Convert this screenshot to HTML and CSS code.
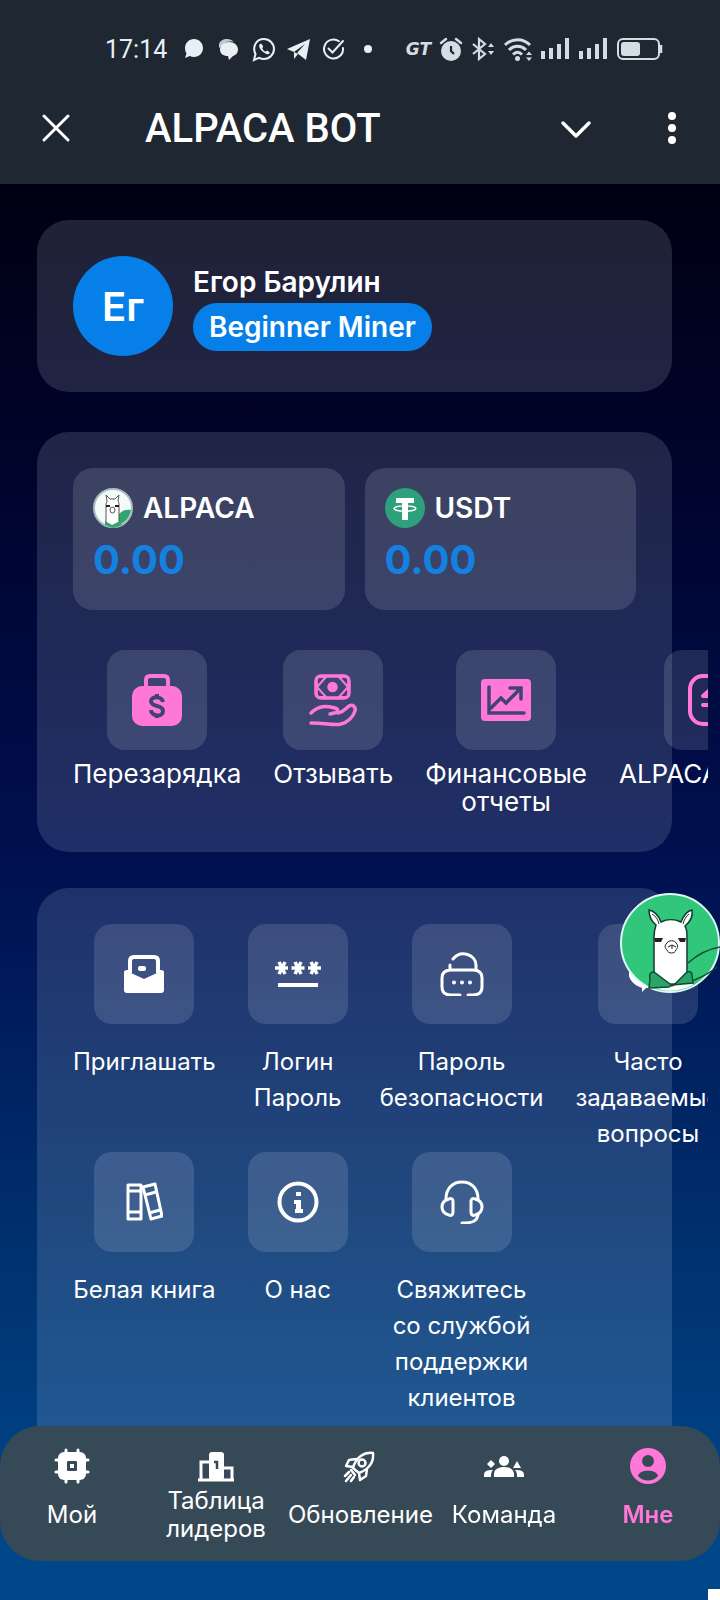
FILE: index.html
```
<!DOCTYPE html>
<html lang="ru">
<head>
  <meta charset="UTF-8">
  <title>ALPACA BOT</title>
  <meta name="viewport" content="width=device-width,initial-scale=1">
  <link rel="stylesheet" href="styles.css">
</head>
<body>
  <header class="top">
    <div class="status">
      <div class="status-left">
        <span class="time">17:14</span>
        <svg width="25" height="26" viewBox="0 0 25 26" fill="currentColor"><path d="M13 3c5 0 9 4 9 9s-4 9-9 9c-1.500 0-3-.3-4.200-1L4 22l1.500-4.500C4.500 16 4 14 4 12c0-5 4-9 9-9z"/></svg>
        <svg width="25" height="26" viewBox="0 0 25 26" fill="currentColor"><path d="M3 8c1-3 4-5 8-5 3 0 5 1 7 3-5-1-9-.5-12 4L3 12z" opacity=".8"/><path d="M13 6c5 0 9 3 9 7.500 0 3.500-2 5.500-5 6.500l-4 4-1-4c-5 0-8-2.500-8-6.500C4 9 8 6 13 6z"/></svg>
        <svg width="25" height="28" viewBox="0 0 25 28" fill="none" stroke="currentColor" stroke-width="2"><path d="M3 25l1.500-6C1 12 5 4 13 4c5.500 0 10 4.500 10 10s-4.500 10-10 10c-2 0-3.500-.5-5-1.200z"/><path d="M9 9c-1.500 1.500-1 4 2 7s6 4 7.500 2.500c.7-1-.5-2-2.500-3l-1.500 1.200c-1.500-.7-2.700-2-3.300-3.400l1-1.500C11.500 10 10.500 8 9 9z" fill="currentColor" stroke="none"/></svg>
        <svg width="25" height="26" viewBox="0 0 25 26" fill="currentColor"><path d="M24 3L1 13l7 3L19 8l-8 9 9 7z"/><path d="M8 16v7l4-5z"/></svg>
        <svg width="25" height="26" viewBox="0 0 25 26" fill="none" stroke="currentColor" stroke-width="2" stroke-linecap="round"><path d="M18 5.200A9.500 9.500 0 1 0 22 12"/><path d="M7.500 12.500l4 4L22 5"/></svg>
        <svg width="25" height="26" viewBox="0 0 25 26" fill="currentColor"><circle cx="12" cy="13" r="4"/></svg>
      </div>
      <div class="status-right">
        <span class="gt">GT</span>
        <svg width="24" height="26" viewBox="0 0 24 26"><circle cx="12" cy="15" r="10" fill="currentColor"/><path d="M2 7l5-4M22 7l-5-4" stroke="currentColor" stroke-width="2.500" stroke-linecap="round"/><path d="M12 10v5l3 3" stroke="#1f2832" stroke-width="2.200" fill="none"/></svg>
        <svg width="24" height="26" viewBox="0 0 24 26" fill="none" stroke="currentColor" stroke-width="2.200"><path d="M2 8l12 10-6 5V3l6 5L2 18"/><path d="M17 11l3-4 3 4zM17 15l3 4 3-4z" fill="currentColor" stroke="none"/></svg>
        <svg width="30" height="26" viewBox="0 0 30 26" fill="none" stroke="currentColor" stroke-width="3"><path d="M2 9c7-7 18-7 25 0M6 14c5-5 12-5 17 0M10 18.500c3-3 6-3 9 0"/><circle cx="14.500" cy="22.500" r="2.500" fill="currentColor" stroke="none"/><path d="M23 19l3-3.500 3 3.500zM23 21.500l3 3.500 3-3.500z" fill="currentColor" stroke="none"/></svg>
        <svg width="30" height="26" viewBox="0 0 30 26" fill="currentColor"><path d="M0 15h4v8H0zM8 12h4v11H8zM16 8h4v15h-4zM24 2h4v21h-4z"/></svg>
        <svg width="30" height="26" viewBox="0 0 30 26" fill="currentColor"><path d="M0 15h4v8H0zM8 12h4v11H8zM16 8h4v15h-4zM24 2h4v21h-4z"/></svg>
        <svg width="46" height="26" viewBox="0 0 46 26"><rect x="1" y="3" width="41" height="20" rx="5" fill="none" stroke="currentColor" stroke-width="2"/><rect x="4" y="6" width="19" height="14" rx="3" fill="currentColor"/><path d="M44 9v8" stroke="currentColor" stroke-width="2.500"/></svg>
      </div>
    </div>
    <div class="titlebar">
      <button class="icon-btn" aria-label="Закрыть"><svg width="32" height="32" viewBox="0 0 32 32" fill="none" stroke="currentColor" stroke-width="3" stroke-linecap="round"><path d="M4 4l24 24M28 4L4 28"/></svg></button>
      <h1>ALPACA BOT</h1>
      <button class="icon-btn" aria-label="Свернуть"><svg width="32" height="32" viewBox="0 0 32 32" fill="none" stroke="currentColor" stroke-width="3.500" stroke-linecap="round" stroke-linejoin="round"><path d="M3 11l13 13L29 11"/></svg></button>
      <button class="icon-btn" aria-label="Меню"><svg width="32" height="32" viewBox="0 0 32 32" fill="currentColor"><circle cx="16" cy="4" r="4"/><circle cx="16" cy="16" r="4"/><circle cx="16" cy="28" r="4"/></svg></button>
    </div>
  </header>

  <main>
    <section class="card profile">
      <div class="avatar">Ег</div>
      <div>
        <div class="name">Егор Барулин</div>
        <div class="badge">Beginner Miner</div>
      </div>
    </section>

    <section class="card wallet">
      <div class="balances">
        <div class="balance">
          <div class="coin">
            <svg width="40" height="40" viewBox="0 0 40 40"><circle cx="20" cy="20" r="19" fill="#f4fbf8" stroke="#a5bfc0" stroke-width="2"/><path d="M24 31c2-7 7-10 14-9-1 5-3 9-7 12l-5 3z" fill="#2ea66e"/><path d="M13 37V17c0-2 1-3 1-4l-1-6 4 4h5l4-4-1 6c1 2 1 3 1 5v19" fill="#fff" stroke="#555" stroke-width="1"/><path d="M12 33l7 4 8-4 2 4-9 3-8-3z" fill="#2ea66e"/><path d="M13 18h4M22 18h4" stroke="#222" stroke-width="2"/><ellipse cx="19.500" cy="22" rx="2.500" ry="3" fill="none" stroke="#555"/></svg>
            ALPACA
          </div>
          <div class="amount">0.00</div>
        </div>
        <div class="balance">
          <div class="coin">
            <svg width="40" height="40" viewBox="0 0 40 40"><circle cx="20" cy="20" r="20" fill="#2ea07b"/><path d="M11 10h18v5h-6v17h-6V15h-6z" fill="#fff"/><ellipse cx="20" cy="20.500" rx="11" ry="2.700" fill="none" stroke="#fff" stroke-width="1.300"/></svg>
            USDT
          </div>
          <div class="amount">0.00</div>
        </div>
      </div>
      <div class="scroller actions">
        <a class="item" href="#"><span class="tile pink">
          <svg width="52" height="54" viewBox="0 0 52 54"><path d="M15 14V7c0-3 2-4 4-4h14c2 0 4 1 4 4v7" fill="none" stroke="currentColor" stroke-width="4"/><rect x="1" y="13" width="50" height="40" rx="10" fill="currentColor"/><path d="M32 29c-1-6-12-6-12-1 0 7 12 3 12 10s-12 5-12-1M26 21v4M26 41v4" fill="none" stroke="#414473" stroke-width="4"/></svg>
        </span>Перезарядка</a>
        <a class="item" href="#"><span class="tile pink">
          <svg width="50" height="54" viewBox="0 0 50 54" fill="none" stroke="currentColor" stroke-width="3.500" stroke-linecap="round" stroke-linejoin="round"><rect x="8" y="3" width="33" height="22" rx="5"/><path d="M9 14l9-10H10c-1 0-2 1-2 3zM9 14l9 10h-8c-1 0-2-1-2-3zM40 14L31 4h8c1 0 2 1 2 3zM40 14l-9 10h8c1 0 2-1 2-3z" stroke-width="2"/><circle cx="24.500" cy="14" r="3.500" fill="currentColor"/><path d="M3 40c8-8 15-7 24-5 4 1 3 5-1 5l-4 1M30 40c6-1 8-5 11-7 4-2 7 1 6 5-2 6-7 11-14 13-7 2-14-1-30-1"/></svg>
        </span>Отзывать</a>
        <a class="item" href="#"><span class="tile pink">
          <svg width="50" height="42" viewBox="0 0 50 42"><rect width="50" height="42" rx="4" fill="currentColor"/><path d="M8 8v26h35M10 29l10-10 5 5 14-14M29 9h11v11" fill="none" stroke="#414473" stroke-width="3.500" stroke-linecap="round"/></svg>
        </span>Финансовые<br>отчеты</a>
        <a class="item" href="#"><span class="tile pink">
          <svg width="52" height="52" viewBox="0 0 52 52" fill="none" stroke="currentColor" stroke-width="4" stroke-linecap="round" stroke-linejoin="round"><rect x="2" y="2" width="48" height="48" rx="13"/><path d="M38 22H15l8-7M15 31h23l-8 7"/></svg>
        </span>ALPACA обмен</a>
      </div>
    </section>

    <section class="card menu">
      <div class="scroller links">
        <a class="item" href="#"><span class="tile">
          <svg width="42" height="38" viewBox="0 0 42 38"><path d="M7 18V6c0-2 1-4 4-4h20c3 0 4 2 4 4v12" fill="none" stroke="currentColor" stroke-width="4"/><path d="M1 17c0-1 1-2 3-2h4v3l13 6 13-6v-3h4c2 0 3 1 3 2v18c0 2-1 3-3 3H4c-2 0-3-1-3-3z" fill="currentColor"/><rect x="15" y="11" width="8" height="5" rx="2" fill="currentColor"/></svg>
        </span>Приглашать</a>
        <a class="item" href="#"><span class="tile">
          <svg width="46" height="26" viewBox="0 0 46 26" fill="none" stroke="currentColor" stroke-width="3.500"><path d="M4 1l6 12M10 1L4 13M0 7h13M20 1l6 12M26 1l-6 12M16.500 7h13M36 1l6 12M42 1l-6 12M33 7h13"/><path d="M3 24h40" stroke-width="4"/></svg>
        </span>Логин Пароль</a>
        <a class="item" href="#"><span class="tile">
          <svg width="44" height="44" viewBox="0 0 44 44" fill="none" stroke="currentColor" stroke-width="3" stroke-linecap="round"><path d="M10 18v-5M13 7c8-10 23-4 23 6v5M20 43h-9c-6 0-9-3-9-8v-9c0-5 3-8 9-8h22c6 0 9 3 9 8v9c0 5-3 8-9 8h-5"/><path d="M14 30.500h0M22 30.500h0M30 30.500h0" stroke-width="4"/></svg>
        </span>Пароль безопасности</a>
        <a class="item" href="#"><span class="tile">
          <svg width="44" height="44" viewBox="0 0 44 44" fill="currentColor"><path d="M12 4h25c3 0 5 2 5 5v22c0 3-2 5-5 5H20l-4 4v-4c-6-2-12-7-13-12V13c0-5 4-9 9-9z"/></svg>
        </span>Часто задаваемые вопросы</a>
        <a class="item" href="#"><span class="tile">
          <svg width="38" height="40" viewBox="0 0 38 40" fill="none" stroke="currentColor" stroke-width="3" stroke-linejoin="round"><path d="M3 3h13v34H3zM3 9h13M3 30h13"/><path d="M18 5l12-3 7 32-11 3zM20 13l11-3M24 31l11-3"/></svg>
        </span>Белая книга</a>
        <a class="item" href="#"><span class="tile">
          <svg width="42" height="42" viewBox="0 0 42 42"><circle cx="21" cy="21" r="18.500" fill="none" stroke="currentColor" stroke-width="4"/><path d="M19 11h5v4h-5zM17 19h7v9h2v4h-8v-4h1v-5h-2z" fill="currentColor"/></svg>
        </span>О нас</a>
        <a class="item" href="#"><span class="tile">
          <svg width="44" height="44" viewBox="0 0 44 44" fill="none" stroke="currentColor" stroke-width="3" stroke-linecap="round" stroke-linejoin="round"><path d="M6 19C6 9 12 2 22 2s16 7 16 17"/><path d="M9 19c2-1 4 0 4 2v11c0 3-2 4-4 3-4-1-7-4-7-8s3-7 7-8zM35 19c-2-1-4 0-4 2v11c0 3 2 4 4 3 4-1 7-4 7-8s-3-7-7-8z"/><path d="M38 35c-1 6-5 8-16 8"/></svg>
        </span>Свяжитесь со службой поддержки клиентов</a>
      </div>
    </section>
  </main>

  <button class="fab" aria-label="Alpaca">
    <svg viewBox="0 0 100 100">
      <circle cx="50" cy="50" r="49" fill="#31c77b" stroke="#dff8f4" stroke-width="2"/>
      <path d="M68 70c10-9 20-14 32-16M72 88c10-4 18-8 25-14" fill="none" stroke="#124b35" stroke-width="1.500"/>
      <path d="M31 93c12 7 28 6 42-1l-1-5H32z" fill="#fff"/>
      <path d="M34 84V44c0-6 1-9 2-12-5-4-7-10-7-15 6 1 10 7 12 12 6-3 14-3 20 0 2-5 6-11 11-12 1 6-2 12-7 16 2 3 2 6 2 11v40L52 93z" fill="#fff" stroke="#15392c" stroke-width="1.500"/>
      <path d="M32 21c4 2 6 6 7 10M69 21c-3 2-5 6-6 10" fill="none" stroke="#15392c"/>
      <path d="M34 45h9l-2 4h-6zM58 45h8l-1 4h-5z" fill="#222"/>
      <path d="M47 50c1-3 8-3 9 0 3 3 1 5 0 7-1 4-8 4-9 0-2-2-3-4 0-7zM48 54l4-2 4 2M52 52v4" fill="none" stroke="#222"/>
      <path d="M34 79c-4 0-5 3-4 6l-1 10 20-1 3-2 21-2-1-8c0-3-2-4-5-3L55 91h-5z" fill="#2aa568" stroke="#124b35" stroke-width="1.500"/>
    </svg>
  </button>

  <nav class="tabs">
    <a href="#"><svg width="36" height="36" viewBox="0 0 36 36"><path d="M12 2v32M24 2v32M2 12h32M2 24h32" stroke="currentColor" stroke-width="3" stroke-linecap="round"/><rect x="4" y="4" width="28" height="28" rx="6" fill="currentColor"/><rect x="13" y="13" width="10" height="10" rx="1" fill="#364957"/><rect x="16" y="16" width="4" height="4" fill="currentColor"/></svg><span>Мой</span></a>
    <a href="#"><svg width="38" height="36" viewBox="0 0 38 36"><path d="M4 32V14h9M27 20h8v12" fill="none" stroke="currentColor" stroke-width="3"/><rect x="12" y="4" width="15" height="28" rx="3" fill="currentColor"/><path d="M1 32h36" stroke="currentColor" stroke-width="3"/><path d="M17 14h3v7" fill="none" stroke="#364957" stroke-width="2.500"/></svg><span>Таблица лидеров</span></a>
    <a href="#"><svg width="36" height="36" viewBox="0 0 36 36" fill="none" stroke="currentColor" stroke-width="2.500" stroke-linecap="round" stroke-linejoin="round"><path d="M11 20c3-11 11-16 20-15 1 9-4 16-14 20zM14 11l-7 1-3 6 7 1M25 21l-1 7-6 4-1-7M9 22l4 5"/><circle cx="20" cy="15" r="3.500"/><path d="M7 24l-4 4M9 27l-5 6M12 29l-3 4"/></svg><span>Обновление</span></a>
    <a href="#"><svg width="42" height="36" viewBox="0 0 42 36" fill="currentColor"><circle cx="21" cy="13" r="5"/><path d="M11 29v-3c0-5 5-7 10-7s10 2 10 7v3z"/><path d="M8 12l4 4-4 4-4-4zM34 13l4 7h-8zM1 29v-2c0-4 3-5 9-5-2 2-2 4-2 7zM41 29v-2c0-4-3-5-9-5 2 2 2 4 2 7z"/></svg><span>Команда</span></a>
    <a href="#" class="active"><svg width="36" height="36" viewBox="0 0 36 36"><circle cx="18" cy="18" r="18" fill="currentColor"/><circle cx="18" cy="13" r="6" fill="#364957"/><path d="M8 28c1-7 19-7 20 0-5 6-15 6-20 0z" fill="#364957"/></svg><span>Мне</span></a>
  </nav>
  <div class="corner"></div>
</body>
</html>
```

FILE: styles.css
```
* { box-sizing: border-box; }
body { margin: 0; height: 100vh; overflow: hidden; display: flex; flex-direction: column; font-family: Inter, "Noto Sans", sans-serif; color: #fff; background: #000010; }
a { color: inherit; text-decoration: none; }
button { border: none; background: none; color: inherit; padding: 0; cursor: pointer; }
svg { display: block; flex: none; }

.top { background: #1f2832; height: 184px; flex: none; font-family: Roboto, sans-serif; }
.status { display: flex; justify-content: space-between; padding: 34px 57px 0 105px; height: 64px; color: #e9eff4; }
.status-left, .status-right { display: flex; align-items: center; gap: 10px; }
.status-right { gap: 8px; color: #d5dce3; }
.time { font-size: 25px; margin-right: 4px; }
.gt { font: italic bold 17px "DejaVu Sans", sans-serif; }
.titlebar { display: flex; align-items: center; height: 128px; padding: 0 32px 0 40px; gap: 64px; }
.titlebar h1 { flex: 1; margin: 0 0 0 9px; font-size: 40px; font-weight: 500; }

main { flex: 1; min-height: 0; padding: 36px 48px 0 37px; overflow: hidden; background: linear-gradient(#000012, #000530 23%, #001050 48%, #002e6c 73%, #00478a 95%); }
.card { background: rgba(225, 240, 255, .14); border-radius: 32px; padding: 36px; margin-bottom: 40px; }
.profile { display: flex; align-items: center; gap: 20px; font-size: 28px; font-weight: 600; }
.avatar { width: 100px; height: 100px; border-radius: 50%; background: #0680e8; display: flex; align-items: center; justify-content: center; font-size: 40px; }
.name { line-height: 42px; }
.badge { background: #0680e8; border-radius: 24px; padding: 0 16px; line-height: 48px; }

.wallet { margin-bottom: 36px; }
.balances { display: grid; grid-template-columns: 1fr 1fr; gap: 20px; margin-bottom: 40px; }
.balance { background: rgba(255, 255, 255, .13); border-radius: 20px; padding: 20px; height: 142px; }
.coin { display: flex; align-items: center; gap: 10px; font-size: 28px; font-weight: 600; }
.amount { color: #1480e0; font-size: 40px; line-height: 64px; font-weight: 700; }

/* rows run past the card and are cut at the edge of the screen */
.scroller { display: grid; column-gap: 32px; margin-right: -72px; overflow: hidden; text-align: center; }
.item { display: flex; flex-direction: column; align-items: center; }
.tile { width: 100px; height: 100px; flex: none; border-radius: 18px; background: rgba(255, 255, 255, .13); display: flex; align-items: center; justify-content: center; }
.pink { color: #ff78d8; }
.actions { grid-template-columns: repeat(4, max-content); font-size: 26px; line-height: 28px; }
.actions .tile { margin-bottom: 10px; }
.links { grid-template-columns: repeat(4, min-content); font-size: 24px; line-height: 36px; }
.links .tile { margin-bottom: 20px; }
/* room for the tab bar that lies over the end of the page */
.menu { padding-bottom: 72px; }

.fab { position: fixed; right: 0; top: 893px; width: 100px; height: 100px; }
.tabs { position: fixed; left: 0; right: 0; bottom: 39px; height: 135px; padding: 22px 0 16px; border-radius: 40px; background: #364957; display: grid; grid-template-columns: repeat(5, 1fr); font-size: 24px; line-height: 28px; text-align: center; }
.tabs a { display: flex; flex-direction: column; align-items: center; min-width: 0; }
.tabs span { flex: 1; display: flex; align-items: center; max-width: 144px; }
.tabs .active { color: #ff78d8; font-weight: 600; }
.corner { position: fixed; right: 0; bottom: 0; width: 12px; height: 11px; background: #fff; }
```
